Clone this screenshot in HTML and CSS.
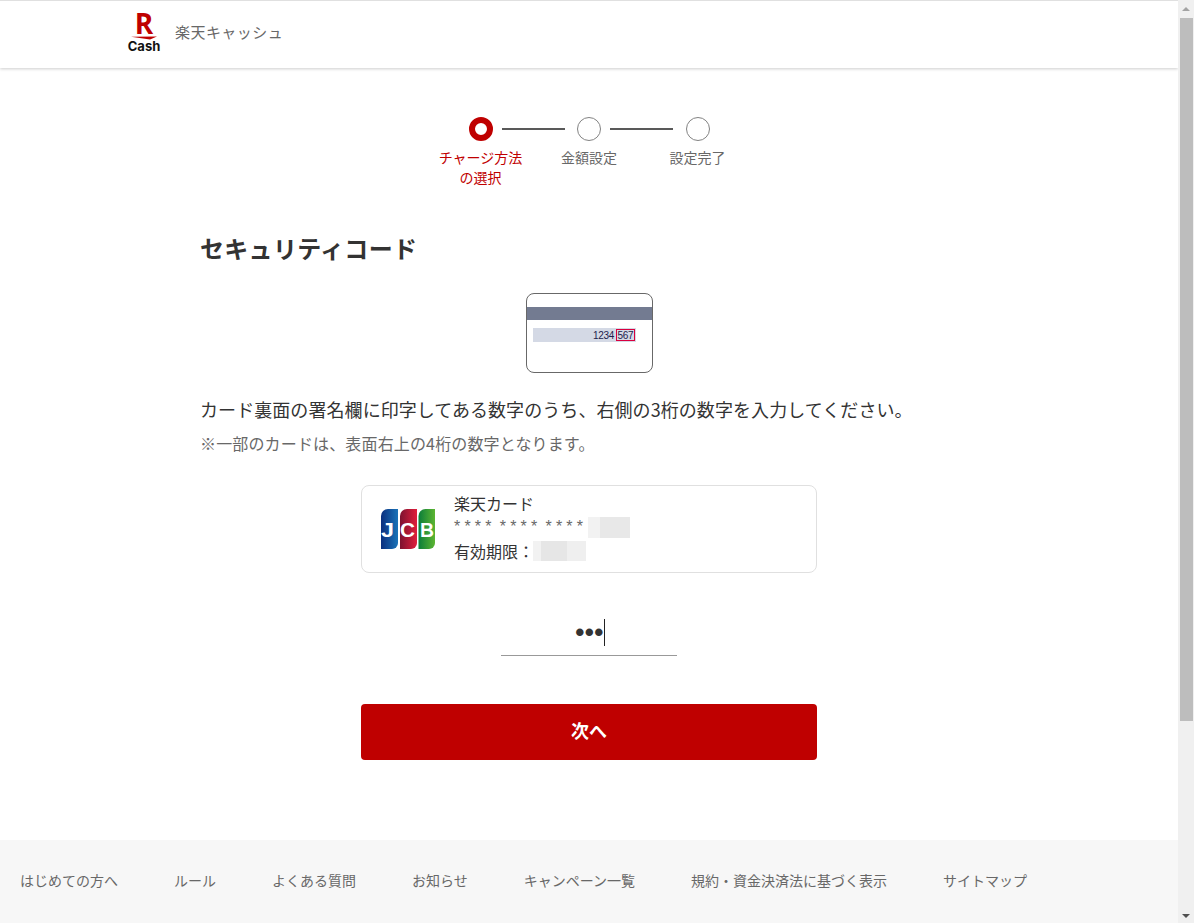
FILE: index.html
```html
<!DOCTYPE html>
<html lang="ja">
<head>
<meta charset="utf-8">
<title>楽天キャッシュ</title>
<link rel="stylesheet" href="styles.css">
</head>
<body>
<div class="page">
  <header class="header">
    <div class="logo">
      <span class="logo-r">R</span>
      <svg class="logo-swoosh" width="26" height="4" viewBox="0 0 26 4"><path d="M0 .8 L26 .4 L19 3.600 Z" fill="#bf0000"/></svg>
      <span class="logo-cash">Cash</span>
    </div>
    <span class="brand">楽天キャッシュ</span>
  </header>
  <main class="main">
    <ol class="steps">
      <li class="step step-active"><span class="dot"></span><span class="step-label">チャージ方法<br>の選択</span></li>
      <li class="step"><span class="dot"></span><span class="step-label">金額設定</span></li>
      <li class="step"><span class="dot"></span><span class="step-label">設定完了</span></li>
    </ol>
    <section class="content">
      <h1 class="title">セキュリティコード</h1>
      <div class="card-art">
        <div class="card-stripe"></div>
        <div class="card-sign"><span class="card-num">1234</span><span class="card-cvv">567</span></div>
      </div>
      <p class="desc">カード裏面の署名欄に印字してある数字のうち、右側の3桁の数字を入力してください。</p>
      <p class="note">※一部のカードは、表面右上の4桁の数字となります。</p>
      <div class="pay-card">
        <svg class="jcb" width="55" height="42" viewBox="0 0 55 42">
          <defs>
            <linearGradient id="jb" x1="0" x2="1" y1="0" y2="0"><stop offset="0" stop-color="#0a2f7e"/><stop offset="1" stop-color="#1a73b8"/></linearGradient>
            <linearGradient id="jr" x1="0" x2="1" y1="0" y2="0"><stop offset="0" stop-color="#7d1230"/><stop offset="1" stop-color="#e01e3c"/></linearGradient>
            <linearGradient id="jg" x1="0" x2="1" y1="0" y2="0"><stop offset="0" stop-color="#0b7d3a"/><stop offset="1" stop-color="#5cb531"/></linearGradient>
          </defs>
          <path d="M0 8a7 7 0 0 1 7-7h10v34a6 6 0 0 1-6 6H0z" fill="url(#jb)"/>
          <path d="M19 8a7 7 0 0 1 7-7h10v34a6 6 0 0 1-6 6H19z" fill="url(#jr)"/>
          <path d="M37.500 8a7 7 0 0 1 7-7H54v34a6 6 0 0 1-6 6H37.500z" fill="url(#jg)"/>
          <text class="jcb-letter" x="0" y="29" textLength="13" lengthAdjust="spacingAndGlyphs">J</text>
          <text class="jcb-letter" x="19" y="29" textLength="15" lengthAdjust="spacingAndGlyphs">C</text>
          <text class="jcb-letter" x="39" y="29" textLength="14" lengthAdjust="spacingAndGlyphs">B</text>
        </svg>
        <div class="pay-info">
          <div class="pay-name">楽天カード</div>
          <div class="pay-number">**** **** ****<span class="blur blur-num"><i></i><i></i></span></div>
          <div class="pay-exp">有効期限：<span class="blur blur-exp"><i></i><i></i><i></i></span></div>
        </div>
      </div>
      <div class="code-field"><span class="code-value">•••</span><span class="caret"></span></div>
      <button class="next" type="button">次へ</button>
    </section>
  </main>
  <footer class="footer">
    <a>はじめての方へ</a><a>ルール</a><a>よくある質問</a><a>お知らせ</a><a>キャンペーン一覧</a><a>規約・資金決済法に基づく表示</a><a>サイトマップ</a>
  </footer>
</div>
<div class="scrollbar">
  <span class="arrow-up"></span>
  <div class="thumb"></div>
  <span class="arrow-down"></span>
</div>
</body>
</html>
```
FILE: styles.css
```css
* { box-sizing: border-box; }
html, body { margin: 0; height: 923px; overflow: hidden; }
body {
  display: flex;
  font-family: "Noto Sans CJK JP", "Noto Sans", sans-serif;
  color: #333;
  background: #fff;
}
.page { width: 1178px; height: 923px; display: flex; flex-direction: column; }
.header {
  height: 68px;
  flex: none;
  border-top: 1px solid #e0e0e0;
  display: flex;
  align-items: center;
  padding: 0 0 3px 128px;
  gap: 15px;
  box-shadow: 0 1px 3px rgba(0,0,0,.2);
}
.logo { width: 32px; display: flex; flex-direction: column; align-items: center; }
.logo-r {
  font: 700 28px/21px "Open Sans", sans-serif;
  color: #bf0000;
  height: 21px;
}
.logo-swoosh { display: block; margin-top: 2px; }
.logo-cash {
  font: 700 13px/15px Inter, sans-serif;
  color: #111;
  margin-top: -1px;
}
.brand { font-size: 15px; letter-spacing: .45px; color: #686868; line-height: 20px; margin-bottom: 2px; }
.main { flex: 1; }
.steps {
  list-style: none;
  margin: 0;
  padding: 49px 0 0;
  display: flex;
  justify-content: center;
  height: 133px;
}
.step {
  width: 108.500px;
  display: flex;
  flex-direction: column;
  align-items: center;
  position: relative;
  color: #686868;
}
.step + .step::before {
  content: "";
  position: absolute;
  left: -33px;
  width: 63px;
  top: 11px;
  border-top: 2px solid #595959;
}
.dot {
  width: 24px;
  height: 24px;
  border-radius: 50%;
  border: 1.500px solid #828282;
  background: #fff;
}
.step-active .dot { border: 6px solid #bf0000; }
.step-active { color: #bf0000; }
.step-label {
  font-size: 14px;
  line-height: 20px;
  margin-top: 6px;
  text-align: center;
  white-space: nowrap;
}
.content { width: 776px; margin-left: 201px; }
.title {
  margin: 29px 0 0 -1px;
  font-size: 24px;
  line-height: 36px;
  font-weight: 700;
  letter-spacing: .3px;
  color: #333;
}
.card-art {
  width: 127px;
  height: 80px;
  margin: 27px auto 0 325px;
  border: 1px solid #686868;
  border-radius: 8px;
  padding-top: 13px;
}
.card-stripe { height: 13px; background: #737b91; }
.card-sign {
  height: 14px;
  margin: 8px 6px 0;
  width: 103px;
  background: #d4d9e5;
  display: flex;
  align-items: center;
  justify-content: flex-end;
  font: 10px/11px "Liberation Sans", sans-serif;
  color: #1d1d4d;
}
.card-num { margin-right: 2px; letter-spacing: -.3px; }
.card-cvv {
  width: 19px;
  height: 12px;
  border: 1px solid #d9003f;
  display: flex;
  align-items: center;
  justify-content: center;
  letter-spacing: -.3px;
  margin-right: 1px;
}
.desc { margin: 23px 0 0 -1px; font-size: 18px; line-height: 26px; letter-spacing: .07px; color: #333; white-space: nowrap; }
.note { margin: 9px 0 0 -1px; font-size: 16px; line-height: 24px; letter-spacing: .15px; color: #686868; white-space: nowrap; }
.pay-card {
  width: 456px;
  height: 88px;
  margin: 30px 0 0 160px;
  border: 1px solid #e0e0e0;
  border-radius: 8px;
  display: flex;
  align-items: center;
  padding-left: 19px;
  gap: 18px;
}
.jcb { display: block; flex: none; }
.jcb-letter { font: 700 20px "Liberation Sans", sans-serif; fill: #fff; }
.pay-info { color: #333; font-size: 16px; line-height: 24px; padding-bottom: 4px; }
.pay-number { font: 16px/22px "Liberation Sans", sans-serif; letter-spacing: 4.200px; word-spacing: -4.600px; color: #686868; display: flex; align-items: center; height: 24px; white-space: pre; }
.pay-exp { display: flex; align-items: center; height: 24px; }
.blur { display: inline-flex; height: 21px; }
.blur-num { margin-left: 1px; width: 42px; }
.blur-num i:first-child { width: 12px; background: #f2f2f2; }
.blur-num i:last-child { flex: 1; background: #e8e8e8; }
.blur-exp { margin-left: -1px; width: 53px; height: 20px; }
.blur-exp i:nth-child(1) { width: 8px; background: #f2f2f2; }
.blur-exp i:nth-child(2) { width: 26px; background: #e6e6e6; }
.blur-exp i:nth-child(3) { flex: 1; background: #efefef; }
.code-field {
  width: 176px;
  height: 48px;
  margin: 35px 0 0 300px;
  border-bottom: 1px solid #999;
  display: flex;
  align-items: center;
  justify-content: center;
  padding-left: 2px;
}
.code-value { font: 700 26px/28px "Liberation Sans", sans-serif; letter-spacing: .4px; color: #333; }
.caret { width: 1px; height: 27px; background: #222; margin-top: 2px; }
.next {
  display: block;
  width: 456px;
  height: 56px;
  margin: 48px 0 0 160px;
  border: 0;
  padding: 0 0 5px;
  border-radius: 4px;
  background: #bf0000;
  color: #fff;
  font: 700 18px/24px "Noto Sans CJK JP", sans-serif;
}
.footer {
  height: 83px;
  flex: none;
  background: #f7f7f7;
  display: flex;
  align-items: center;
  gap: 56px;
  padding: 0 0 4px 20px;
  color: #686868;
  font-size: 14px;
  line-height: 20px;
}
.scrollbar {
  width: 16px;
  height: 923px;
  flex: none;
  background: #f0f0f0;
  position: relative;
  display: flex;
  flex-direction: column;
  align-items: center;
}
.thumb { width: 13px; height: 703px; background: #bdbdbd; margin: 7px 0 0 1px; }
.arrow-up { margin-top: 7px; border: 4px solid transparent; border-top: 0; border-bottom: 4px solid #a3a3a3; }
.arrow-down { position: absolute; bottom: 5px; border: 4px solid transparent; border-bottom: 0; border-top: 4px solid #505050; }
```
